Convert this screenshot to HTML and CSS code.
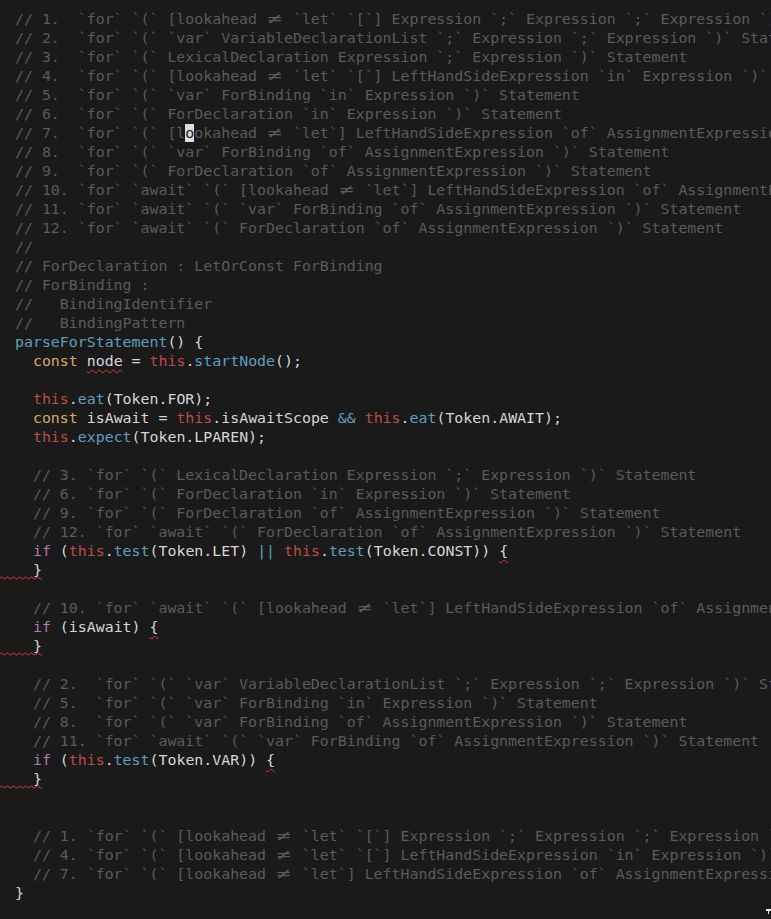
FILE: index.html
```html
<!DOCTYPE html>
<html lang="en">
<head>
    <meta charset="UTF-8">
    <meta name="viewport" content="width=device-width, initial-scale=1.0">
    <title>parser.js</title>
    <link rel="stylesheet" href="styles.css">
</head>
<body>

    <div class="editor">
        <div class="ln c">// 1.  `for` `(` [lookahead <span class="ne">≠</span> `let` `[`] Expression `;` Expression `;` Expression `)` Statement</div>
        <div class="ln c">// 2.  `for` `(` `var` VariableDeclarationList `;` Expression `;` Expression `)` Statement</div>
        <div class="ln c">// 3.  `for` `(` LexicalDeclaration Expression `;` Expression `)` Statement</div>
        <div class="ln c">// 4.  `for` `(` [lookahead <span class="ne">≠</span> `let` `[`] LeftHandSideExpression `in` Expression `)` Statement</div>
        <div class="ln c">// 5.  `for` `(` `var` ForBinding `in` Expression `)` Statement</div>
        <div class="ln c">// 6.  `for` `(` ForDeclaration `in` Expression `)` Statement</div>
        <div class="ln c">// 7.  `for` `(` [l<span class="cursor">o</span>okahead <span class="ne">≠</span> `let`] LeftHandSideExpression `of` AssignmentExpression `)` Statement</div>
        <div class="ln c">// 8.  `for` `(` `var` ForBinding `of` AssignmentExpression `)` Statement</div>
        <div class="ln c">// 9.  `for` `(` ForDeclaration `of` AssignmentExpression `)` Statement</div>
        <div class="ln c">// 10. `for` `await` `(` [lookahead <span class="ne">≠</span> `let`] LeftHandSideExpression `of` AssignmentExpression `)` Statement</div>
        <div class="ln c">// 11. `for` `await` `(` `var` ForBinding `of` AssignmentExpression `)` Statement</div>
        <div class="ln c">// 12. `for` `await` `(` ForDeclaration `of` AssignmentExpression `)` Statement</div>
        <div class="ln c">//</div>
        <div class="ln c">// ForDeclaration : LetOrConst ForBinding</div>
        <div class="ln c">// ForBinding :</div>
        <div class="ln c">//   BindingIdentifier</div>
        <div class="ln c">//   BindingPattern</div>
        <div class="ln"><span class="fn">parseForStatement</span>() {</div>
        <div class="ln">  <span class="kw">const</span> <span class="squig">node</span> = <span class="th">this</span>.<span class="fn">startNode</span>();</div>
        <div class="ln"> </div>
        <div class="ln">  <span class="th">this</span>.<span class="fn">eat</span>(Token.FOR);</div>
        <div class="ln">  <span class="kw">const</span> isAwait = <span class="th">this</span>.isAwaitScope <span class="op">&amp;&amp;</span> <span class="th">this</span>.<span class="fn">eat</span>(Token.AWAIT);</div>
        <div class="ln">  <span class="th">this</span>.<span class="fn">expect</span>(Token.LPAREN);</div>
        <div class="ln"> </div>
        <div class="ln c">  // 3. `for` `(` LexicalDeclaration Expression `;` Expression `)` Statement</div>
        <div class="ln c">  // 6. `for` `(` ForDeclaration `in` Expression `)` Statement</div>
        <div class="ln c">  // 9. `for` `(` ForDeclaration `of` AssignmentExpression `)` Statement</div>
        <div class="ln c">  // 12. `for` `await` `(` ForDeclaration `of` AssignmentExpression `)` Statement</div>
        <div class="ln">  <span class="if">if</span> (<span class="th">this</span>.<span class="fn">test</span>(Token.LET) <span class="op">||</span> <span class="th">this</span>.<span class="fn">test</span>(Token.CONST)) <span class="squig">{</span></div>
        <div class="ln warn">  }<svg class="wave" width="42" height="4" viewBox="0 0 42 4"><path d="M0 2 q1.5 -2 3 0 t3 0 t3 0 t3 0 t3 0 t3 0 t3 0 t3 0 t3 0 t3 0 t3 0 t3 0 t3 0 t3 0"/></svg></div>
        <div class="ln"> </div>
        <div class="ln c">  // 10. `for` `await` `(` [lookahead <span class="ne">≠</span> `let`] LeftHandSideExpression `of` AssignmentExpression `)` Statement</div>
        <div class="ln">  <span class="if">if</span> (isAwait) <span class="squig">{</span></div>
        <div class="ln warn">  }<svg class="wave" width="42" height="4" viewBox="0 0 42 4"><path d="M0 2 q1.5 -2 3 0 t3 0 t3 0 t3 0 t3 0 t3 0 t3 0 t3 0 t3 0 t3 0 t3 0 t3 0 t3 0 t3 0"/></svg></div>
        <div class="ln"> </div>
        <div class="ln c">  // 2.  `for` `(` `var` VariableDeclarationList `;` Expression `;` Expression `)` Statement</div>
        <div class="ln c">  // 5.  `for` `(` `var` ForBinding `in` Expression `)` Statement</div>
        <div class="ln c">  // 8.  `for` `(` `var` ForBinding `of` AssignmentExpression `)` Statement</div>
        <div class="ln c">  // 11. `for` `await` `(` `var` ForBinding `of` AssignmentExpression `)` Statement</div>
        <div class="ln">  <span class="if">if</span> (<span class="th">this</span>.<span class="fn">test</span>(Token.VAR)) <span class="squig">{</span></div>
        <div class="ln warn">  }<svg class="wave" width="42" height="4" viewBox="0 0 42 4"><path d="M0 2 q1.5 -2 3 0 t3 0 t3 0 t3 0 t3 0 t3 0 t3 0 t3 0 t3 0 t3 0 t3 0 t3 0 t3 0 t3 0"/></svg></div>
        <div class="ln"> </div>
        <div class="ln"> </div>
        <div class="ln c">  // 1. `for` `(` [lookahead <span class="ne">≠</span> `let` `[`] Expression `;` Expression `;` Expression `)` Statement</div>
        <div class="ln c">  // 4. `for` `(` [lookahead <span class="ne">≠</span> `let` `[`] LeftHandSideExpression `in` Expression `)` Statement</div>
        <div class="ln c">  // 7. `for` `(` [lookahead <span class="ne">≠</span> `let`] LeftHandSideExpression `of` AssignmentExpression `)` Statement</div>
        <div class="ln">}</div>

        <svg class="grip" width="5" height="6" viewBox="0 0 5 6"><path d="M0 0 H5 V2 H3 V5 H2 V2 H0 Z"/></svg>
    </div>

</body>
</html>
```

FILE: styles.css
```css
html, body {
    margin: 0;
    padding: 0;
    background: #1a1a1a;
}
.editor {
    position: relative;
    height: 919px;
    overflow: hidden;
    padding: 10px 0 0 15px;
    box-sizing: border-box;
    font-family: "DejaVu Sans Mono", "Liberation Mono", monospace;
    font-size: 14.9px;
    color: #d6d6d6;
}
.ln {
    position: relative;
    height: 19px;
    line-height: 19px;
    white-space: pre;
}
.c {
    color: #5b5b5b; /* comments */
}
.kw {
    color: #d9a866;
}
.th {
    color: #bd4b48;
}
.fn {
    color: #5e9fbd;
}
.op {
    color: #5e9fbd;
}
.if {
    color: #b27aa5;
}
.ne {
    display: inline-block;
    width: 2ch;
    text-align: center;
    transform: scaleX(1.6);
}
.cursor {
    background: #dcdcdc;
    color: #1a1a1a;
}
.squig {
    text-decoration: underline wavy #c8403c;
    text-decoration-thickness: 1px;
    text-underline-offset: 3px;
}
.wave {
    position: absolute;
    left: -15px;
    bottom: 0;
}
.wave path {
    fill: none;
    stroke: #c8403c;
    stroke-width: 1;
}
.grip {
    position: absolute;
    right: 0;
    bottom: 4px;
}
.grip path {
    fill: #e8e8e8;
}
```
